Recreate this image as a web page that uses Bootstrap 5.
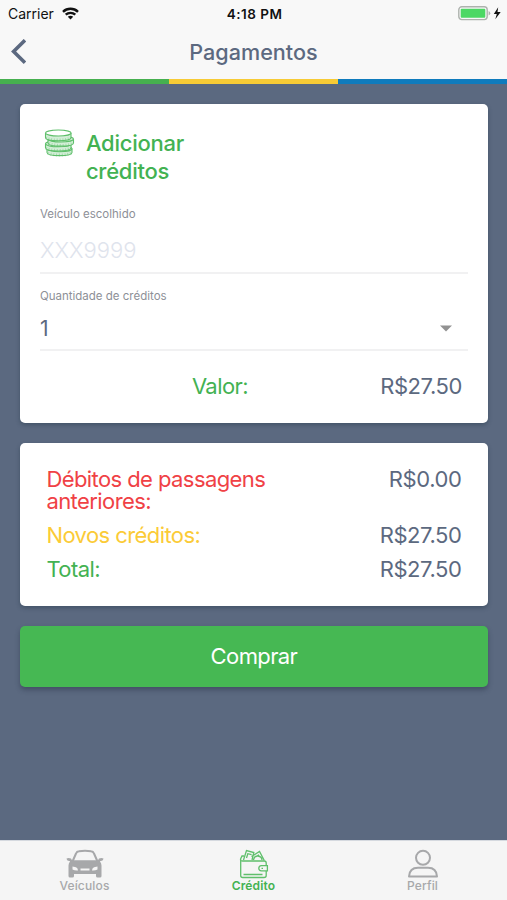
<!DOCTYPE html>
<html lang="pt-BR">
<head>
<meta charset="utf-8">
<meta name="viewport" content="width=device-width, initial-scale=1">
<title>Pagamentos</title>
<link rel="stylesheet" href="https://cdn.jsdelivr.net/npm/bootstrap@5.3.0/dist/css/bootstrap.min.css">
<style>
body{font-family:Inter,"Liberation Sans",sans-serif;background:#5b6980;color:#5c6980;height:900px;overflow:hidden}
svg{display:block;flex:none}
.topbar{background:#f8f8f8;height:79px}
.status{height:27px;color:#111;font-size:14px;line-height:27px;padding:0 6px 0 8px}
.status .side{flex:1 1 0}
.clock{font-size:13.5px;font-weight:600;letter-spacing:.5px;padding-top:1px}
.titlebar{height:50px;padding:0 10px}
.titlebar h1{font-size:21.6px;font-weight:500;line-height:50px}
.stripe{height:5px}
.stripe div{flex:1}
.s-green{background:#46b04f}.s-yellow{background:#f7cb36}.s-blue{background:#0f7bbd}
main{padding:20px 19.5px 0 20.4px;gap:20px}
.panel{border:0;border-radius:5px;box-shadow:0 2px 4px rgba(30,50,65,.4)}
.panel-a{height:319px;padding:25px 19.5px 0}
.panel-b{height:163px;padding:25px 26px 0}
.t-green{color:#43b252}.t-yellow{color:#fbcb37}.t-red{color:#f04145}
.heading{font-size:22px;line-height:28px;font-weight:500;width:120px;letter-spacing:-.25px}
.fieldlabel{font-size:11.5px;line-height:14px;color:#8d9097}
.label-vehicle{margin-top:22px}
.label-amount{margin-top:15px}
.fieldvalue{font-size:22px;line-height:28px;border-bottom:2px solid #f1f1f2}
.vehicle{height:53px;padding-top:15px;color:#dfe4ed;font-weight:300}
.quantity{height:48px;padding:5px 16px 0 0;font-size:21px}
.amount{font-size:22px;line-height:22px;letter-spacing:-.58px}
.amount span:last-child{letter-spacing:-.4px}
.value-row{margin-top:24px;padding-right:6px}
.value-row .t-green{margin-left:152px}
.buy{background:#46b853;border:0;border-radius:5px;height:61px;font-size:22px;letter-spacing:-.6px;color:#fff;box-shadow:0 3px 5px rgba(30,40,60,.4)}
.buy:hover{background:#3fac4c;color:#fff}
.tabs{height:60px;background:#f5f5f5;border-top:1px solid #d5d9df}
.tabs a{flex:1;font-size:12px;line-height:14px;font-weight:500;color:#a7a8aa;padding-top:8px;letter-spacing:.15px}
.tabs a.current{color:#43b252;font-weight:600}
</style>
<script src="https://cdn.jsdelivr.net/npm/bootstrap@5.3.0/dist/js/bootstrap.bundle.min.js"></script>
</head>
<body class="d-flex flex-column">
<header>
  <div class="topbar">
    <div class="status d-flex align-items-center">
      <div class="side d-flex align-items-center">
        <span>Carrier</span>
        <svg class="ms-2" width="17" height="13" viewBox="0 0 17 13" fill="none" stroke="#111" stroke-width="2.4"><path d="M1 4.8C5.2.8 11.8.8 16 4.8M3.7 7.7c2.7-2.5 6.9-2.5 9.6 0"/><path d="M5.8 9.8c1.5-1.4 3.9-1.4 5.4 0L8.5 12.6z" fill="#111" stroke="none"/></svg>
      </div>
      <span class="clock">4:18 PM</span>
      <div class="side d-flex align-items-center justify-content-end">
        <svg width="43" height="15" viewBox="0 0 43 15"><rect x=".8" y=".8" width="28.4" height="12.8" rx="3" fill="#f8f8f8" stroke="#adb2ad" stroke-width="1.4"/><rect x="2.7" y="2.7" width="24.6" height="9" rx="1" fill="#4cd864"/><path d="M30.6 5v4.5q1.7-.6 1.7-2.2T30.6 5z" fill="#adb2ad"/><path d="M40.2 1.2 35.8 8h3l-1.5 5.2 5.4-7.1h-3.2z" fill="#111"/></svg>
      </div>
    </div>
    <div class="titlebar d-flex align-items-center justify-content-between">
      <svg width="16" height="26" viewBox="0 0 16 26" fill="none" stroke="#5c6980" stroke-width="3.6"><path d="M15 1.2 3.600 12.500 15 23.800"/></svg>
      <h1 class="mb-0">Pagamentos</h1>
      <span class="px-2"></span>
    </div>
  </div>
  <div class="stripe d-flex"><div class="s-green"></div><div class="s-yellow"></div><div class="s-blue"></div></div>
</header>
<main class="flex-grow-1 d-flex flex-column">
  <section class="card panel panel-a">
    <div class="d-flex t-green ps-1">
      <svg class="me-2" width="34" height="30" viewBox="0 0 34 30" fill="none" stroke="#5fbf6b" stroke-width="1.1"><g fill="#d3eed7"><path d="M3 19.500v4c0 4.200 25 4.200 25 0v-4"/><ellipse cx="15.500" cy="19.700" rx="12.500" ry="3"/><path d="M1.500 14.800v4c0 4.200 25.500 4.200 25.500 0v-4"/><ellipse cx="14.300" cy="14.800" rx="12.800" ry="3"/><path d="M4 10v4c0 4.200 25.500 4.200 25.500 0v-4"/><ellipse cx="16.700" cy="10" rx="12.800" ry="3"/><path d="M1.500 4v4.500c0 4.400 25.500 4.400 25.500 0V4"/><ellipse cx="14.300" cy="4" rx="12.800" ry="3" fill="#fff"/></g><path stroke-dasharray="1 1.800" stroke-width="3" opacity=".4" d="M2 8.400c3 3.600 22 3.600 24.500 0M5 14c4 3.400 21 3.400 24-.3M2 19c4 3.300 21 3.300 24.500 0M4 24c4 2.800 20 2.800 23.500 0"/></svg>
      <h2 class="heading mb-0">Adicionar créditos</h2>
    </div>
    <div class="fieldlabel label-vehicle">Veículo escolhido</div>
    <div class="fieldvalue vehicle">XXX9999</div>
    <div class="fieldlabel label-amount">Quantidade de créditos</div>
    <div class="fieldvalue quantity d-flex align-items-center justify-content-between">
      <span>1</span>
      <svg width="12" height="7" viewBox="0 0 12 7"><path d="M0 .5h12L6 6.600z" fill="#929292"/></svg>
    </div>
    <div class="amount value-row d-flex justify-content-between"><span class="t-green">Valor:</span><span>R$27.50</span></div>
  </section>
  <section class="card panel panel-b">
    <div class="amount d-flex justify-content-between"><span class="t-red">Débitos de passagens<br>anteriores:</span><span>R$0.00</span></div>
    <div class="amount d-flex justify-content-between mt-2 pt-1"><span class="t-yellow">Novos créditos:</span><span>R$27.50</span></div>
    <div class="amount d-flex justify-content-between mt-2 pt-1"><span class="t-green">Total:</span><span>R$27.50</span></div>
  </section>
  <button class="btn buy w-100" type="button">Comprar</button>
</main>
<nav class="tabs d-flex">
  <a href="#" class="d-flex flex-column align-items-center text-decoration-none">
    <svg width="38" height="30" viewBox="0 0 38 30"><path fill="none" stroke="#a7a8aa" stroke-width="2" stroke-linejoin="round" d="M6.500 12.500 10 4.500Q10.800 2.400 13 2.200q6-.7 12 0 2.200.2 3 2.300l3.500 8"/><path fill="#a7a8aa" fill-rule="evenodd" d="M.5 9.500q2-1 4.500 0l1 1.700h26l1-1.700q2.500-1 4.500 0 0 2-2.500 2.500l-1.200.2q1.700 1.800 1.700 4.300V27q0 1.500-1.500 1.500h-2.500q-1.500 0-1.500-1.500v-2H8v2q0 1.500-1.500 1.500H4q-1.500 0-1.500-1.500V16.500q0-2.500 1.700-4.300L3 12Q.5 11.500.5 9.500zM6.500 17.500v3q2.500 1.400 5.500 1 0-2.500-2-3.300zM31.500 17.500v3q-2.500 1.400-5.500 1 0-2.500 2-3.300zM14.500 19.500v2h9v-2z"/></svg>
    <span>Veículos</span>
  </a>
  <a href="#" class="current d-flex flex-column align-items-center text-decoration-none" aria-current="page">
    <svg width="30" height="30" viewBox="0 0 30 30" fill="none" stroke="#5fbf6b" stroke-width="1.300"><path d="M1.700 10.500v16q0 2 2 2H25q2.200 0 2.200-2V22M27.200 17v-3q0-2-2-2H3.500Q1 12 1.700 9.800L3 7h2"/><path d="M4.500 11 7.500 1.500l7.300 2L13 11M12.500 7.500l8-5 4.800 9M7.500 9l1.300-4.300 3.800 1M14.500 11q.8-4.500 4.500-4t4 4M16.500 8l3.500-2.200"/><path d="M28.400 16.700h-6q-2.600.2-2.600 2.600t2.600 2.600h6zM22.500 19.300h1.500M4.500 25.500h19"/></svg>
    <span>Crédito</span>
  </a>
  <a href="#" class="d-flex flex-column align-items-center text-decoration-none">
    <svg width="32" height="30" viewBox="0 0 32 30" fill="none" stroke="#a7a8aa" stroke-width="2"><circle cx="16" cy="8.800" r="7"/><path stroke-linejoin="round" d="M2 27.500q.5-8.700 9-8.700h10q8.500 0 9 8.700z"/></svg>
    <span>Perfil</span>
  </a>
</nav>
</body>
</html>
